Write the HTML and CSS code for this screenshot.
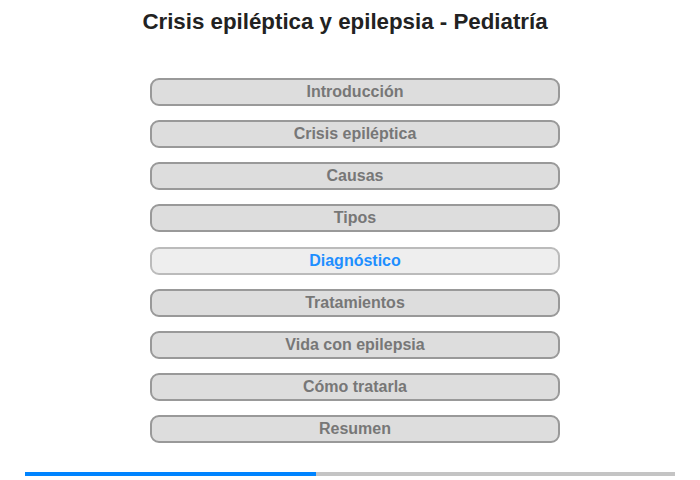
FILE: index.html
```html
<!DOCTYPE html>
<html lang="es">
<head>
<meta charset="utf-8">
<link rel="stylesheet" href="styles.css">
</head>
<body>
<div class="page">
  <h1 class="title">Crisis epiléptica y epilepsia - Pediatría</h1>
  <nav class="menu">
    <div class="item">Introducción</div>
    <div class="item">Crisis epiléptica</div>
    <div class="item">Causas</div>
    <div class="item">Tipos</div>
    <div class="item active">Diagnóstico</div>
    <div class="item">Tratamientos</div>
    <div class="item">Vida con epilepsia</div>
    <div class="item">Cómo tratarla</div>
    <div class="item">Resumen</div>
  </nav>
  <div class="progress"><div class="fill" style="width:44.8%"></div></div>
</div>
</body>
</html>
```
FILE: styles.css
```css
html, body { margin: 0; padding: 0; background: #fff; }
body { font-family: "Liberation Sans", Arial, sans-serif; }
.page { width: 700px; height: 480px; display: flex; flex-direction: column; align-items: center; }
.title { margin: 9px 10px 0 0; font-size: 22.3px; line-height: 26px; font-weight: bold; color: #222; text-align: center; }
.menu { margin: 43px 0 0 10px; display: flex; flex-direction: column; gap: 14.125px; width: 410px; }
.item { box-sizing: border-box; height: 28px; border: 2px solid #999; border-radius: 9px; background: #ddd; color: #777; font-size: 16px; font-weight: bold; text-align: center; line-height: 24px; }
.item.active { background: #eee; border-color: #bbb; color: #1e8fff; }
.progress { margin-top: 29px; width: 650px; height: 4px; background: #c4c4c4; display: flex; }
.fill { height: 100%; background: #0084ff; }
```
